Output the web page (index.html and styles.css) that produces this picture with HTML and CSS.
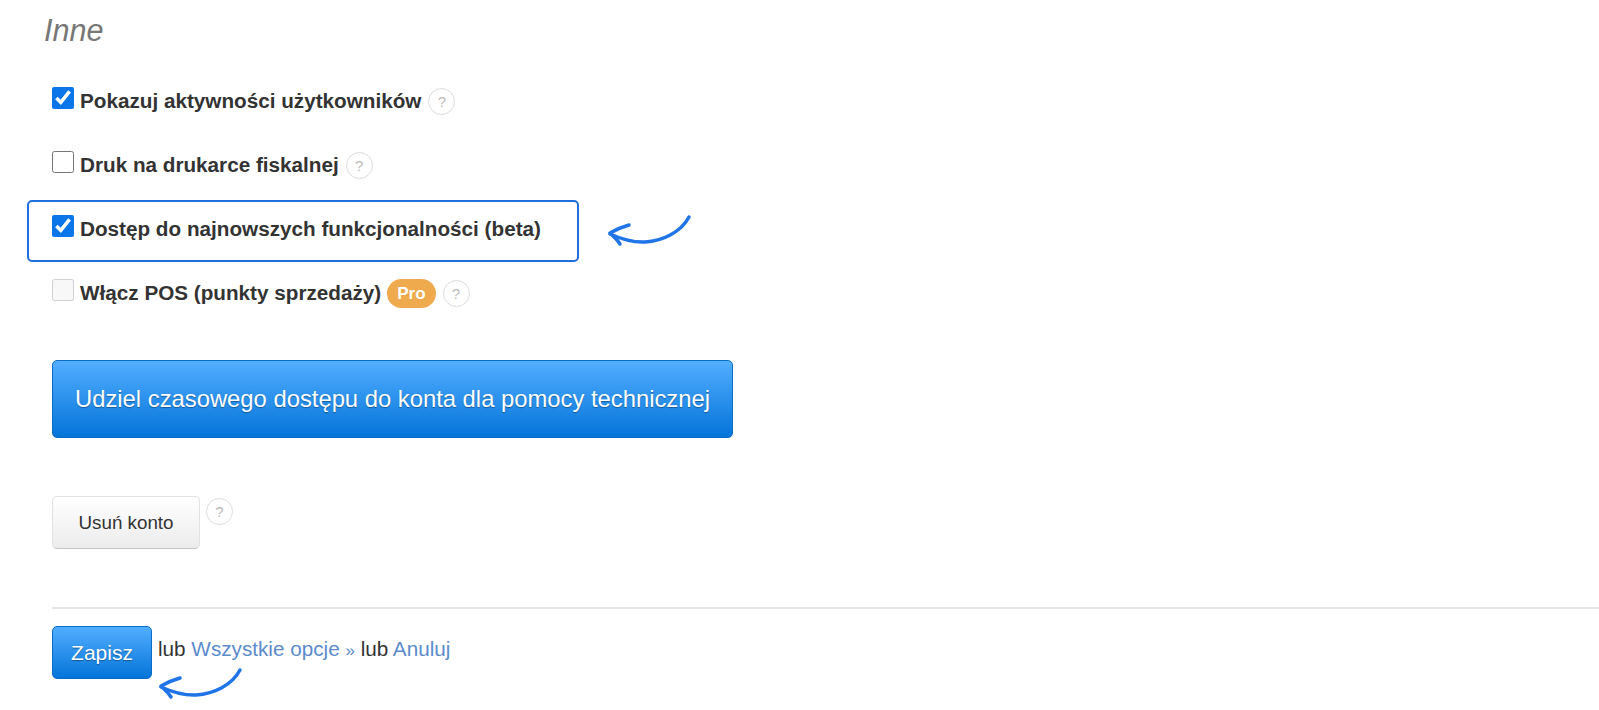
FILE: index.html
```html
<!DOCTYPE html>
<html lang="pl">
<head>
    <meta charset="UTF-8">
    <title>Inne</title>
    <link rel="stylesheet" href="styles.css">
</head>
<body>
    <h2 class="section-title">Inne</h2>

    <form class="options">
        <div class="option">
            <input type="checkbox" id="activity" checked>
            <label for="activity">Pokazuj aktywności użytkowników</label>
            <span class="help">?</span>
        </div>
        <div class="option">
            <input type="checkbox" id="fiscal">
            <label for="fiscal">Druk na drukarce fiskalnej</label>
            <span class="help">?</span>
        </div>
        <div class="option option-marked">
            <input type="checkbox" id="beta" checked>
            <label for="beta">Dostęp do najnowszych funkcjonalności (beta)</label>
            <svg class="arrow arrow-beta" width="90" height="38" viewBox="0 0 90 38">
                <path d="M84 5C76 20 58 29 40 30C28 30.500 16 27 5 22" fill="none" stroke="#1f74e8" stroke-width="3.500" stroke-linecap="round"/>
                <path d="M24 13C17 15 10 18 5 21C8 24 12 27 15 32" fill="none" stroke="#1f74e8" stroke-width="3.500" stroke-linecap="round" stroke-linejoin="round"/>
            </svg>
        </div>
        <div class="option">
            <input type="checkbox" id="pos" disabled>
            <label for="pos">Włącz POS (punkty sprzedaży)</label>
            <span class="badge">Pro</span>
            <span class="help">?</span>
        </div>

        <button type="button" class="btn btn-blue btn-access">Udziel czasowego dostępu do konta dla pomocy technicznej</button>

        <div class="delete-row">
            <button type="button" class="btn btn-gray">Usuń konto</button>
            <span class="help">?</span>
        </div>

        <hr class="divider">

        <div class="actions">
            <button type="button" class="btn btn-blue btn-save">Zapisz</button>
            <span class="links">lub <a href="#">Wszystkie opcje</a> <a href="#" class="raquo">»</a> lub <a href="#">Anuluj</a></span>
            <svg class="arrow arrow-save" width="90" height="38" viewBox="0 0 90 38">
                <path d="M84 5C76 20 58 29 40 30C28 30.500 16 27 5 22" fill="none" stroke="#1f74e8" stroke-width="3.500" stroke-linecap="round"/>
                <path d="M24 13C17 15 10 18 5 21C8 24 12 27 15 32" fill="none" stroke="#1f74e8" stroke-width="3.500" stroke-linecap="round" stroke-linejoin="round"/>
            </svg>
        </div>
    </form>
</body>
</html>
```

FILE: styles.css
```css
body {
    margin: 0;
    padding: 0 0 31px 52px;
    font-family: "Liberation Sans", Arial, sans-serif;
    font-size: 20.7px;
    color: #333;
    background: #fff;
}
.section-title {
    margin: 0 0 40px -8px;
    padding-top: 13px;
    font-size: 30.6px;
    line-height: 34px;
    font-weight: normal;
    font-style: italic;
    color: #777;
}
.option {
    display: flex;
    align-items: center;
    height: 28px;
    margin-bottom: 36px;
}
.option input {
    flex: none;
    width: 22px;
    height: 22px;
    margin: -6px 6px 0 0;
    accent-color: #0b75ea;
}
.option label {
    font-weight: bold;
}
.option-marked {
    position: relative;
    width: 525px;
    height: 54px;
    margin: -15px 0 17px -25px;
    padding: 0 0 4px 23px;
    border: 2px solid #1f6fe0;
    border-radius: 5px;
}
.arrow {
    position: absolute;
}
.arrow-beta {
    left: 576px;
    top: 10px;
}
.help {
    flex: none;
    display: inline-block;
    box-sizing: border-box;
    width: 27px;
    height: 27px;
    margin-left: 7px;
    border: 1px solid #dcdcdc;
    border-radius: 50%;
    font-size: 15px;
    line-height: 25px;
    text-align: center;
    color: #bbb;
}
.badge {
    margin-left: 6px;
    padding: 0 10px;
    height: 29px;
    line-height: 29px;
    border-radius: 15px;
    background: #eeaa4d;
    color: #fff;
    font-size: 17px;
    font-weight: bold;
}
.badge + .help {
    margin-left: 7px;
}
.btn {
    display: block;
    box-sizing: border-box;
    font-family: inherit;
    border-radius: 5px;
    cursor: pointer;
}
.btn-blue {
    border: 1px solid #0a6cc9;
    background: linear-gradient(#52aeff, #0474d9);
    color: #fff;
    text-shadow: 0 1px 1px rgba(0, 0, 0, 0.35);
}
.btn-gray {
    border: 1px solid #e2e2e2;
    border-bottom-color: #c4c4c4;
    background: linear-gradient(#fff, #ececec);
    color: #333;
}
.btn-access {
    width: 681px;
    height: 78px;
    margin-top: 53px;
    font-size: 23.8px;
}
.delete-row {
    display: flex;
    align-items: flex-start;
    margin-top: 58px;
}
.delete-row .btn {
    width: 148px;
    height: 53px;
    font-size: 18.8px;
}
.delete-row .help {
    margin: 2px 0 0 6px;
}
.divider {
    height: 2px;
    margin: 58px 0 0;
    border: 0;
    background: #e5e5e5;
}
.actions {
    position: relative;
    display: flex;
    align-items: flex-start;
    margin-top: 17px;
}
.btn-save {
    width: 100px;
    height: 53px;
    font-size: 21px;
}
.links {
    margin: 12px 0 0 6px;
    line-height: 22px;
}
.links a {
    color: #5b8bcb;
    text-decoration: none;
}
.raquo {
    font-size: 17px;
}
.arrow-save {
    left: 104px;
    top: 39px;
}
```
